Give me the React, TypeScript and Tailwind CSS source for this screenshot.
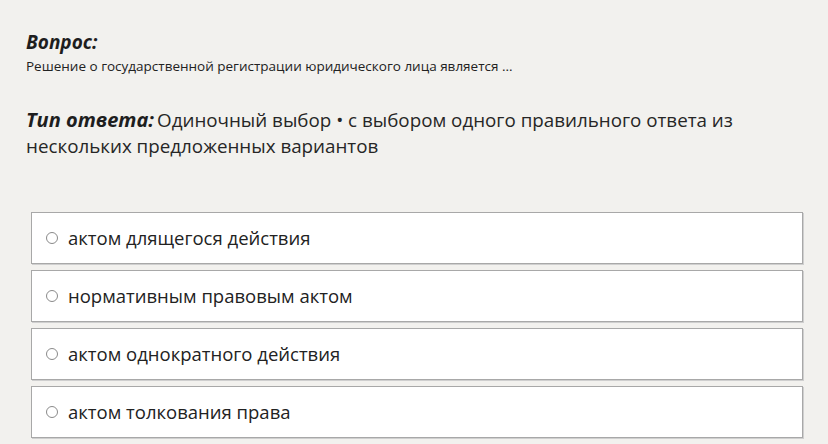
import React from "react";

const options = [
  "актом длящегося действия",
  "нормативным правовым актом",
  "актом однократного действия",
  "актом толкования права",
];

export default function App() {
  return (
    <div
      className="w-[828px] h-[444px] overflow-hidden bg-[#f2f1ee] text-[#222222]"
      style={{ fontFamily: '"Open Sans", "Noto Sans", sans-serif' }}
    >
      <div className="pl-[26px] pr-[26px] pt-[29px]">
        <div className="text-[19px] leading-[26px] font-bold italic text-[#1e1e1e]">Вопрос:</div>
        <div className="mt-[2px] text-[13.5px] leading-[18px] text-[#222]">
          Решение о государственной регистрации юридического лица является ...
        </div>
        <div className="mt-[32px] text-[18.8px] leading-[26px] text-[#262626] w-[760px]">
          <span className="font-bold italic text-[20px] text-[#1e1e1e] mr-[3px]">Тип ответа:</span>Одиночный выбор • с выбором одного правильного ответа из нескольких предложенных вариантов
        </div>
      </div>
      <div className="mt-[53px] ml-[31px] w-[772px] flex flex-col gap-[6px]">
        {options.map((o) => (
          <div
            key={o}
            className="h-[52px] bg-white border border-[#a8a8a8] shadow-[1px_1px_0_#cfcfcf] flex items-center pl-[14px]"
          >
            <span className="w-[12px] h-[12px] rounded-full border border-[#8a8a8a] bg-white shrink-0" />
            <span className="ml-[10px] text-[18.5px] text-[#222]">{o}</span>
          </div>
        ))}
      </div>
    </div>
  );
}
